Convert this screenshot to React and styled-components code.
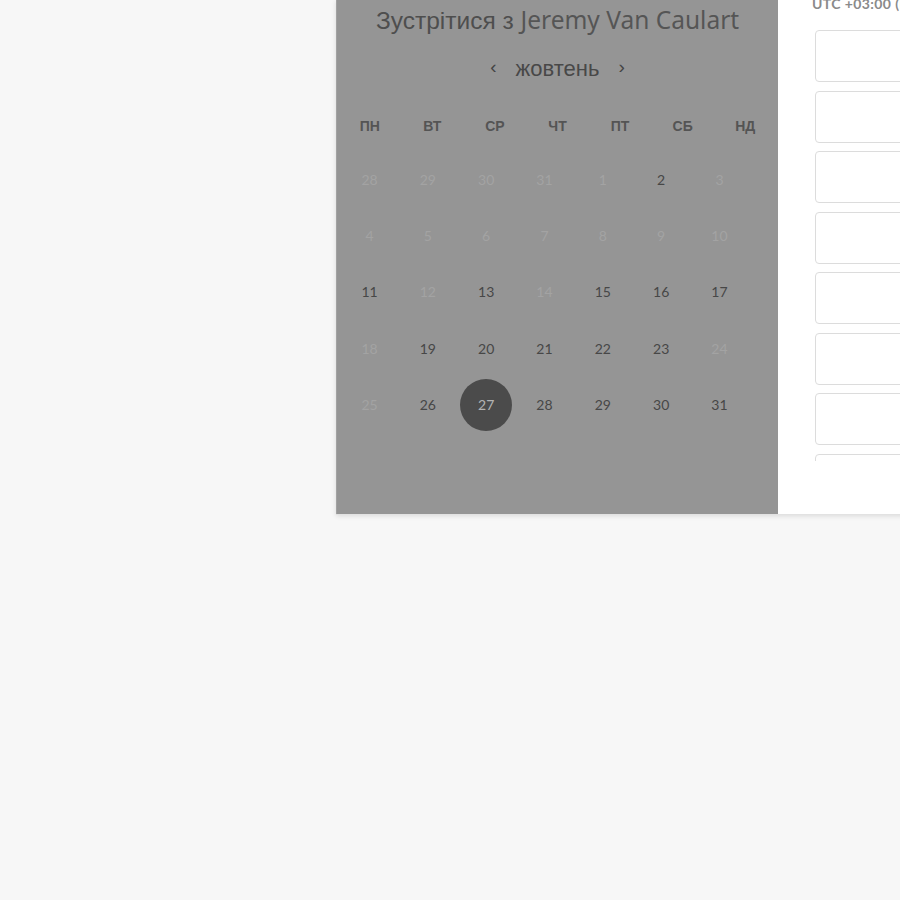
import React from 'react';
import styled, { createGlobalStyle } from 'styled-components';

const Global = createGlobalStyle`
  html, body {
    margin: 0;
    background: #f7f7f7;
    overflow: hidden;
  }
`;

const Page = styled.div`
  width: 900px;
  height: 900px;
  padding-left: 336px;
  box-sizing: border-box;
  overflow: hidden;
`;

const Card = styled.div`
  display: flex;
  width: 800px;
  height: 514px;
  background: #fff;
  box-shadow: 0 1px 5px rgba(0, 0, 0, 0.12);
  border-bottom: 1px solid #e2e2e2;
`;

const CalendarPane = styled.div`
  width: 442px;
  flex: none;
  background: #959595;
  border-left: 1px solid #a2a2a2;
  box-sizing: border-box;
  display: flex;
  flex-direction: column;
  align-items: center;
`;

const Title = styled.div`
  line-height: 40px;
  font-family: 'Liberation Sans', Arial, sans-serif;
  font-size: 24.5px;
  color: #4e4e4e;
  white-space: nowrap;
`;

const Name = styled.span`
  font-family: 'Noto Sans', Lato, sans-serif;
  font-weight: 400;
  color: #555;
`;

const MonthNav = styled.div`
  margin-top: 10px;
  height: 36px;
  display: flex;
  align-items: center;
  gap: 19px;
  font-family: 'Liberation Sans', Arial, sans-serif;
  font-size: 22px;
  color: #484848;
`;

const Chevron = styled.span`
  font-size: 19px;
  line-height: 1;
  color: #444;
  padding-bottom: 5px;
`;

const WeekHeader = styled.div`
  margin-top: 29px;
  width: 438px;
  display: grid;
  grid-template-columns: repeat(7, 1fr);
  line-height: 20px;
  font-family: 'Liberation Sans', Arial, sans-serif;
  font-weight: 700;
  font-size: 14px;
  color: #545454;
  text-align: center;
`;

const Days = styled.div`
  margin-top: 15px;
  margin-right: 26px;
  display: grid;
  grid-template-columns: repeat(7, 58.33px);
  grid-auto-rows: 56.4px;
`;

const Day = styled.div`
  display: flex;
  align-items: center;
  justify-content: center;
  font-family: Lato, 'Liberation Sans', sans-serif;
  font-size: 14px;
  color: ${p => (p.$off ? '#a3a3a3' : '#474747')};
`;

const Selected = styled.span`
  width: 52px;
  height: 52px;
  border-radius: 50%;
  background: #4b4b4b;
  color: #b3b3b3;
  display: flex;
  align-items: center;
  justify-content: center;
`;

const SlotsPane = styled.div`
  flex: 1;
  padding-left: 34px;
  display: flex;
  flex-direction: column;
`;

const Zone = styled.div`
  margin-top: -4px;
  line-height: 16px;
  font-family: Lato, 'Liberation Sans', sans-serif;
  font-weight: 700;
  font-size: 14px;
  letter-spacing: 0.4px;
  color: #8a8a8a;
  white-space: nowrap;
`;

const SlotList = styled.div`
  margin-top: 18px;
  margin-left: 3px;
  height: 431px;
  overflow: hidden;
  display: flex;
  flex-direction: column;
  gap: 8.5px;
`;

const Slot = styled.div`
  flex: none;
  height: 52px;
  border: 1px solid #dcdcdc;
  border-radius: 4px;
  box-sizing: border-box;
`;

const weekdays = ['ПН', 'ВТ', 'СР', 'ЧТ', 'ПТ', 'СБ', 'НД'];

const open = [2, 11, 13, 15, 16, 17, 19, 20, 21, 22, 23, 26, 27, 28, 29, 30, 31];

const cells = [
  ...[28, 29, 30, 31].map(n => ({ n, prev: true })),
  ...Array.from({ length: 31 }, (_, i) => ({ n: i + 1 })),
];

export default function App() {
  return (
    <Page>
      <Global />
      <Card>
        <CalendarPane>
          <Title>
            Зустрітися з <Name>Jeremy Van Caulart</Name>
          </Title>
          <MonthNav>
            <Chevron>‹</Chevron>
            жовтень
            <Chevron>›</Chevron>
          </MonthNav>
          <WeekHeader>
            {weekdays.map(d => (
              <div key={d}>{d}</div>
            ))}
          </WeekHeader>
          <Days>
            {cells.map((c, i) => {
              const off = c.prev || !open.includes(c.n);
              return (
                <Day key={i} $off={off}>
                  {!c.prev && c.n === 27 ? <Selected>27</Selected> : c.n}
                </Day>
              );
            })}
          </Days>
        </CalendarPane>
        <SlotsPane>
          <Zone>UTC +03:00 (Київ)</Zone>
          <SlotList>
            {Array.from({ length: 9 }, (_, i) => (
              <Slot key={i} />
            ))}
          </SlotList>
        </SlotsPane>
      </Card>
    </Page>
  );
}
